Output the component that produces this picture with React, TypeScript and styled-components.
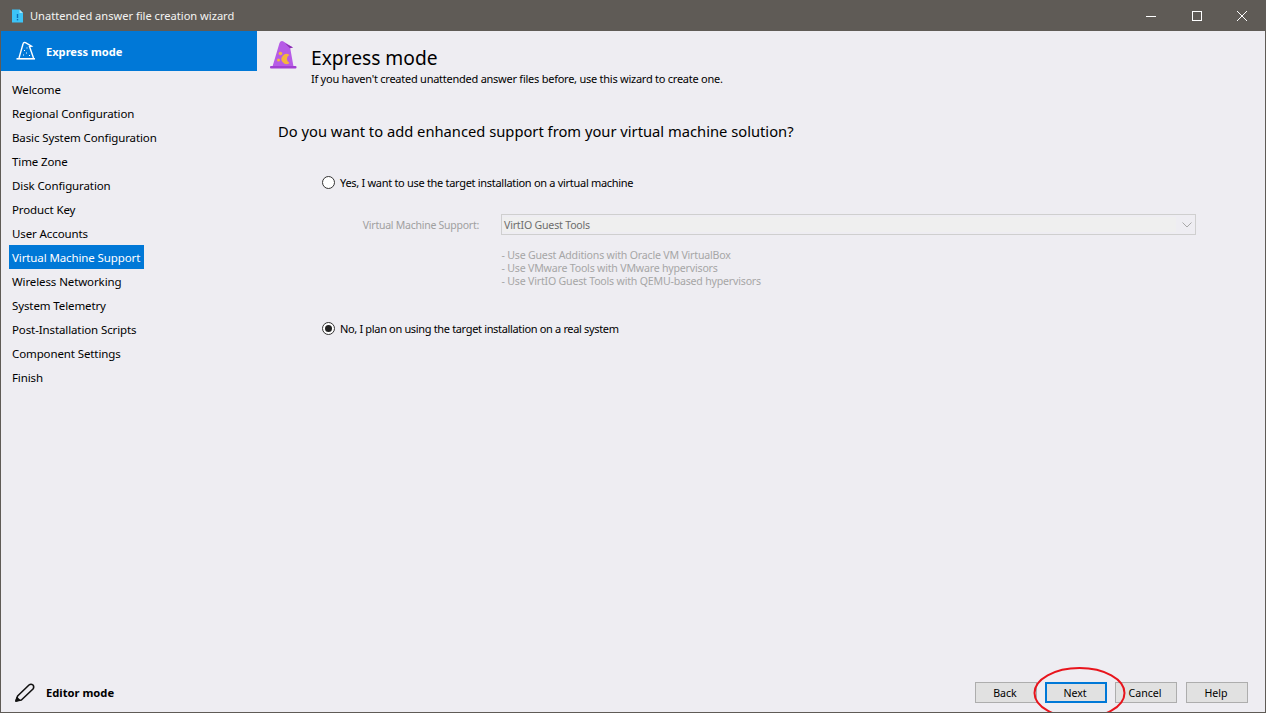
import React from "react";
import styled, { createGlobalStyle } from "styled-components";

const Global = createGlobalStyle`
  html, body { margin: 0; padding: 0; height: 100%; overflow: hidden; background: #eeedf2; }
  #root { height: 100%; }
`;
const FONT = `"Noto Sans", "Open Sans", sans-serif`;

const Window = styled.div`
  position: relative;
  width: 1266px;
  height: 713px;
  box-sizing: border-box;
  display: flex;
  flex-direction: column;
  border: 1px solid #5f5b56;
  border-top: 0;
  background: #eeedf2;
  font-family: ${FONT};
  font-size: 11.5px;
  color: #000;
  overflow: hidden;
`;
const TitleBar = styled.div`
  height: 31px;
  margin: 0 -1px;
  flex: none;
  display: flex;
  align-items: center;
  background: #5f5b56;
  color: #fff;
  padding: 0 1px 0 12px;
`;
const TitleIcon = styled.svg`
  width: 11px;
  height: 14px;
  margin-right: 7px;
`;
const TitleText = styled.span`
  flex: 1;
  font-size: 11.1px;
  color: #f4f4f2;
`;
const WinButton = styled.div`
  width: 45.5px;
  height: 31px;
  display: flex;
  align-items: center;
  justify-content: center;
`;
const Body = styled.div`
  flex: 1;
  display: flex;
  min-height: 0;
`;
const Sidebar = styled.aside`
  width: 256px;
  flex: none;
  display: flex;
  flex-direction: column;
`;
const ModeHeader = styled.div`
  height: 40px;
  background: #0078d7;
  color: #fff;
  display: flex;
  align-items: center;
  padding-left: 14px;
  gap: 11px;
  font-weight: 700;
  font-size: 11.1px;
  flex: none;
`;
const StepList = styled.ul`
  list-style: none;
  margin: 6px 0 0;
  padding: 0 0 0 8px;
  flex: 1;
`;
const Step = styled.li`
  height: 24px;
  display: flex;
  align-items: center;
`;
const StepLabel = styled.span<{ $active?: boolean }>`
  display: inline-block;
  height: 24px;
  line-height: 26px;
  padding: 0 4px 0 3px;
  letter-spacing: -0.11px;
  background: ${(p) => (p.$active ? "#0078d7" : "transparent")};
  color: ${(p) => (p.$active ? "#fff" : "#000")};
`;
const EditorMode = styled.div`
  height: 40px;
  flex: none;
  display: flex;
  align-items: center;
  padding-left: 14px;
  gap: 11px;
  font-weight: 700;
  font-size: 11.2px;
`;
const Main = styled.main`
  flex: 1;
  display: flex;
  flex-direction: column;
  min-width: 0;
`;
const Header = styled.header`
  display: flex;
  height: 50px;
  padding: 9px 0 0 13px;
  box-sizing: border-box;
  gap: 13px;
  flex: none;
`;
const HeaderText = styled.div`
  display: flex;
  flex-direction: column;
  padding-top: 5px;
`;
const HeaderTitle = styled.h1`
  margin: 0;
  font-size: 19.2px;
  font-weight: 400;
  line-height: 26px;
`;
const HeaderSub = styled.p`
  margin: 0;
  font-size: 11px;
  letter-spacing: -0.25px;
  line-height: 15px;
`;
const Content = styled.div`
  flex: 1;
  padding: 0 0 0 21px;
  display: flex;
  flex-direction: column;
`;
const Question = styled.h2`
  margin: 39px 0 32px;
  font-size: 14.72px;
  font-weight: 400;
  line-height: 22px;
`;
const RadioRow = styled.label<{ $gapTop?: number; $tracking?: number }>`
  display: flex;
  align-items: center;
  gap: 5px;
  margin: ${(p) => p.$gapTop ?? 0}px 0 0 44px;
  height: 16px;
  font-size: 11px;
  letter-spacing: ${(p) => p.$tracking ?? -0.3}px;
`;
const RadioCircle = styled.span<{ $checked?: boolean }>`
  width: 13px;
  height: 13px;
  box-sizing: border-box;
  border: 1px solid #333;
  border-radius: 50%;
  background: #fff;
  display: flex;
  align-items: center;
  justify-content: center;
  &::after {
    content: "";
    display: ${(p) => (p.$checked ? "block" : "none")};
    width: 7px;
    height: 7px;
    border-radius: 50%;
    background: #222;
  }
`;
const Group = styled.div`
  margin-left: 65px;
`;
const SupportRow = styled.div`
  display: flex;
  align-items: center;
  margin-top: 24px;
  height: 21px;
`;
const SupportLabel = styled.span`
  width: 158px;
  text-align: right;
  padding-right: 22px;
  box-sizing: border-box;
  color: #a0a0a0;
  font-size: 10.5px;
  letter-spacing: -0.25px;
`;
const Select = styled.div`
  width: 695px;
  height: 21px;
  box-sizing: border-box;
  border: 1px solid #cfcfcf;
  background: #eeedf2;
  display: flex;
  align-items: center;
  padding: 2px 0 2px 1px;
`;
const SelectValue = styled.div`
  width: 672px;
  height: 15px;
  line-height: 17px;
  padding-left: 1px;
  background: #efefef;
  color: #6d6d6d;
  font-size: 10.6px;
  letter-spacing: -0.2px;
`;
const SelectArrow = styled.svg`
  width: 10px;
  height: 6px;
  margin-left: 6px;
`;
const HintList = styled.div`
  margin: 14px 0 0 158.5px;
  color: #a6a6a6;
  font-size: 10.6px;
  letter-spacing: -0.2px;
  line-height: 13px;
`;
const Footer = styled.div`
  position: absolute;
  right: 17px;
  bottom: 9px;
  display: flex;
`;
const Button = styled.button<{ $primary?: boolean; $gap?: number }>`
  width: 62px;
  height: 21px;
  box-sizing: border-box;
  padding: 0 2px 0 0;
  margin-left: ${(p) => p.$gap ?? 0}px;
  background: #e1e1e1;
  border: ${(p) => (p.$primary ? "2px solid #0078d7" : "1px solid #adadad")};
  font-family: ${FONT};
  font-size: 10.6px;
  color: #000;
`;
const Circle = styled.svg`
  position: absolute;
  left: 1030px;
  top: 666px;
  width: 96px;
  height: 56px;
  pointer-events: none;
`;

const Hat = () => (
  <svg width="28" height="29" viewBox="0 0 28 29" style={{ flex: "none" }}>
    <path d="M2.5 26.5 L9.5 3 Q10.5 0.5 13 1.2 L23 7.5 L20.2 8 L23.5 26.5 Z" fill="#b65be6" />
    <path d="M15 3.2 L23 7.5 L20 8.2 Z" fill="#8a2fae" />
    <rect x="0" y="26" width="26.5" height="2.4" rx="1" fill="#a13fd2" />
    <circle cx="10.5" cy="13.5" r="1.8" fill="#f4b63c" />
    <circle cx="8.5" cy="20" r="1.5" fill="#f4b63c" />
    <path d="M19.5 15 A5 5 0 1 0 19.5 23 A4.4 4.4 0 0 1 19.5 15 Z" fill="#f4b63c" />
  </svg>
);

const LineHat = () => (
  <svg width="20" height="20" viewBox="0 0 20 20" fill="none" stroke="#fff" strokeWidth="1.4" style={{ flex: "none" }}>
    <path d="M4 17 L8 3 Q8.5 1 10.5 1.6 L16.5 5.2 L14.5 5.6 L18.5 17" />
    <path d="M1.5 17.8 H20" strokeWidth="1.6" />
    <path d="M8 14h1M11 12h1M9 9.5h1M11.5 7h1M14 14.5h1" strokeWidth="1.2" />
  </svg>
);

const Pencil = () => (
  <svg width="20" height="20" viewBox="0 0 20 20" fill="none" stroke="#111" strokeWidth="1.6" strokeLinejoin="round" style={{ flex: "none" }}>
    <path d="M1 19 L2.6 14 L14 3 Q16 1.4 18 3 Q19.4 5 18 7 L6.4 18 Z" />
    <path d="M1 19 L2 15.8 L4.4 18 Z" fill="#111" />
  </svg>
);

const steps = [
  "Welcome",
  "Regional Configuration",
  "Basic System Configuration",
  "Time Zone",
  "Disk Configuration",
  "Product Key",
  "User Accounts",
  "Virtual Machine Support",
  "Wireless Networking",
  "System Telemetry",
  "Post-Installation Scripts",
  "Component Settings",
  "Finish",
];

export default function App() {
  return (
    <>
      <Global />
      <Window>
        <TitleBar>
          <TitleIcon viewBox="0 0 11 14">
            <path d="M0 0.5 H7.5 L11 4 V13.5 H0 Z" fill="#3cc4f7" />
            <path d="M7.5 0.5 L11 4 H7.5 Z" fill="#a8e6fb" />
            <rect x="4.8" y="5" width="1.4" height="4" fill="#0b6fb8" />
            <rect x="4.8" y="10" width="1.4" height="1.4" fill="#0b6fb8" />
          </TitleIcon>
          <TitleText>Unattended answer file creation wizard</TitleText>
          <WinButton>
            <svg width="10" height="10" viewBox="0 0 10 10"><path d="M0 5.5 H10" stroke="#fff" strokeWidth="1" /></svg>
          </WinButton>
          <WinButton>
            <svg width="10" height="10" viewBox="0 0 10 10"><rect x=".5" y=".5" width="9" height="9" fill="none" stroke="#fff" strokeWidth="1" /></svg>
          </WinButton>
          <WinButton>
            <svg width="10" height="10" viewBox="0 0 10 10"><path d="M0 0 L10 10 M10 0 L0 10" stroke="#fff" strokeWidth="1" /></svg>
          </WinButton>
        </TitleBar>
        <Body>
          <Sidebar>
            <ModeHeader>
              <LineHat />
              Express mode
            </ModeHeader>
            <StepList>
              {steps.map((s) => (
                <Step key={s}>
                  <StepLabel $active={s === "Virtual Machine Support"}>{s}</StepLabel>
                </Step>
              ))}
            </StepList>
            <EditorMode>
              <Pencil />
              Editor mode
            </EditorMode>
          </Sidebar>
          <Main>
            <Header>
              <Hat />
              <HeaderText>
                <HeaderTitle>Express mode</HeaderTitle>
                <HeaderSub>If you haven't created unattended answer files before, use this wizard to create one.</HeaderSub>
              </HeaderText>
            </Header>
            <Content>
              <Question>Do you want to add enhanced support from your virtual machine solution?</Question>
              <RadioRow>
                <RadioCircle />
                Yes, I want to use the target installation on a virtual machine
              </RadioRow>
              <Group>
                <SupportRow>
                  <SupportLabel>Virtual Machine Support:</SupportLabel>
                  <Select>
                    <SelectValue>VirtIO Guest Tools</SelectValue>
                    <SelectArrow viewBox="0 0 10 6">
                      <path d="M0.5 0.5 L5 5 L9.5 0.5" fill="none" stroke="#a8a8a8" strokeWidth="1" />
                    </SelectArrow>
                  </Select>
                </SupportRow>
                <HintList>
                  <div>- Use Guest Additions with Oracle VM VirtualBox</div>
                  <div>- Use VMware Tools with VMware hypervisors</div>
                  <div>- Use VirtIO Guest Tools with QEMU-based hypervisors</div>
                </HintList>
              </Group>
              <RadioRow $gapTop={32} $tracking={-0.34}>
                <RadioCircle $checked />
                No, I plan on using the target installation on a real system
              </RadioRow>
            </Content>
          </Main>
        </Body>
        <Footer>
          <Button>Back</Button>
          <Button $primary $gap={8}>Next</Button>
          <Button $gap={8}>Cancel</Button>
          <Button $gap={9}>Help</Button>
        </Footer>
        <Circle viewBox="0 0 96 56">
          <ellipse cx="48.5" cy="27" rx="45" ry="25" fill="none" stroke="#e8141c" strokeWidth="2" />
        </Circle>
      </Window>
    </>
  );
}
